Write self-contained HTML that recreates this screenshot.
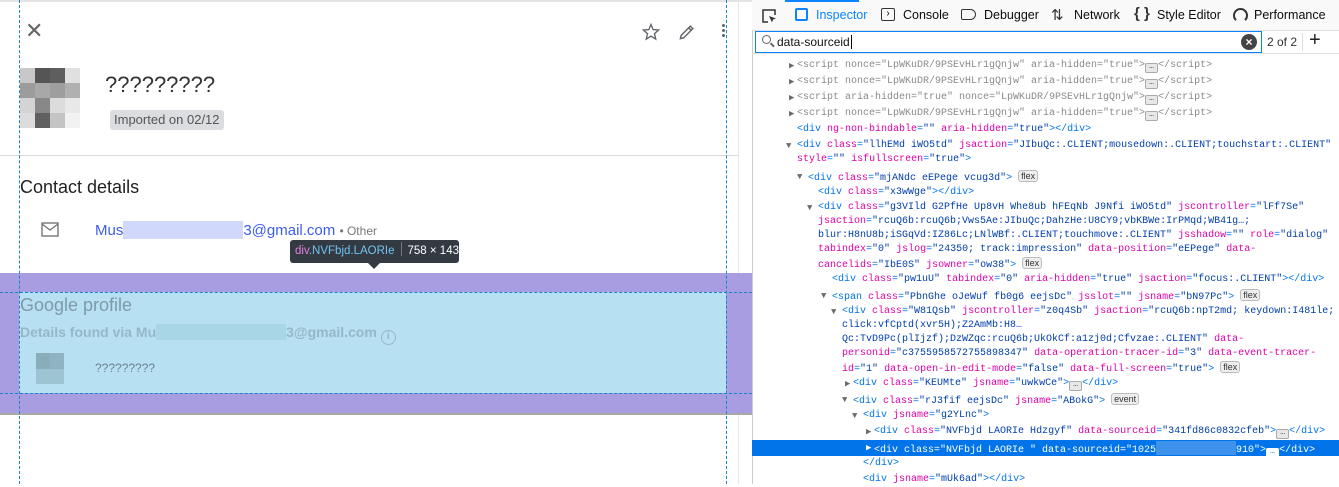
<!DOCTYPE html>
<html><head><meta charset="utf-8"><style>
*{margin:0;padding:0;box-sizing:border-box}
body{width:1339px;height:484px;overflow:hidden;background:#fff;position:relative;font-family:"Liberation Sans",Arial,sans-serif}
.a{position:absolute}
.mono{font-family:"Liberation Mono","DejaVu Sans Mono",monospace;font-size:10px;white-space:pre;line-height:14px;color:#0074e8}
.n{color:#dd00a9}.v{color:#003eaa}.g{color:#8a8a8a}
.tw{position:absolute;left:0;width:9px;font-size:9px;color:#6b6b6b}
.badge{display:inline-block;border:1px solid #bbb;border-radius:3px;background:#eee;color:#333;font-size:9px;line-height:10px;padding:0 2px;vertical-align:1px;font-family:"Liberation Sans",sans-serif}
.el{display:inline-block;border:1px solid #aaa;border-radius:2px;background:#e8e8e8;width:13px;height:10px;vertical-align:-1px;font-size:8px;line-height:6px;text-align:center;color:#333}
.tab{position:absolute;top:0;line-height:31px;font-size:12.5px;color:#0c0c0d;white-space:nowrap}
</style></head><body>
<div class="a" style="left:0;top:0;width:752px;height:2px;background:#e3e3e3"></div>
<div class="a" style="left:738px;top:0;width:1px;height:484px;background:#e6e6e6"></div>
<div class="a" style="left:0;top:155px;width:738px;height:1px;background:#dadada"></div>
<div class="a" style="left:25px;top:20px;font-size:22px;color:#666;line-height:22px">✕</div>
<svg class="a" style="left:641px;top:22px" width="20" height="20" viewBox="0 0 24 24"><path d="M12 3l2.6 6.1 6.6.5-5 4.4 1.5 6.5L12 17l-5.7 3.5 1.5-6.5-5-4.4 6.6-.5z" fill="none" stroke="#5f6368" stroke-width="1.6"/></svg>
<svg class="a" style="left:677px;top:22px" width="20" height="20" viewBox="0 0 24 24"><path d="M4 20l1-4L16 5l3 3L8 19zM14 7l3 3" fill="none" stroke="#5f6368" stroke-width="1.7"/></svg>
<div class="a" style="left:722px;top:24px;width:3px;height:3px;background:#5f6368;border-radius:50%;box-shadow:0 5px #5f6368,0 10px #5f6368"></div>
<div class="a" style="left:20px;top:68px;display:grid;grid-template-columns:repeat(4,15px);grid-auto-rows:15px">
<i style="background:#c8c8c8"></i><i style="background:#555"></i><i style="background:#5e5e5e"></i><i style="background:#e0e0e0"></i>
<i style="background:#9c9c9c"></i><i style="background:#a8a8a8"></i><i style="background:#9e9e9e"></i><i style="background:#b0b0b0"></i>
<i style="background:#d4d4d4"></i><i style="background:#888"></i><i style="background:#dcdcdc"></i><i style="background:#e8e8e8"></i>
<i style="background:#dcdcdc"></i><i style="background:#606060"></i><i style="background:#c4c4c4"></i><i style="background:#f2f2f2"></i>
</div>
<div class="a" style="left:105px;top:72px;font-size:22px;color:#333">?????????</div>
<div class="a" style="left:110px;top:110px;height:20px;padding:0 4px;background:#dcdde0;border-radius:3px;font-size:13px;line-height:20px;color:#555">Imported on 02/12</div>
<div class="a" style="left:20px;top:177px;font-size:18px;color:#222">Contact details</div>
<svg class="a" style="left:41px;top:222px" width="18" height="15" viewBox="0 0 18 15"><rect x="1" y="1" width="16" height="13" fill="none" stroke="#777" stroke-width="1.4"/><path d="M1 2l8 6 8-6" fill="none" stroke="#777" stroke-width="1.4"/></svg>
<div class="a" style="left:95px;top:221px;font-size:15px;color:#3c5cf0;white-space:nowrap">Mus<span style="display:inline-block;width:120px;height:18px;vertical-align:-4px;background:#d0d8fb"></span>3@gmail.com <span style="font-size:12px;color:#777">• Other</span></div>
<div class="a" style="left:0;top:273px;width:752px;height:141px;background:#a79de0"></div>
<div class="a" style="left:0;top:413px;width:752px;height:2px;background:#a8a8a8"></div>
<div class="a" style="left:19px;top:292px;width:707px;height:101px;background:#b7e0f2"></div>
<div class="a" style="left:0;top:292px;width:752px;border-top:1px dashed #1a82c8"></div>
<div class="a" style="left:0;top:393px;width:752px;border-top:1px dashed #1a82c8"></div>
<div class="a" style="left:20px;top:295px;font-size:18px;color:#7e9aa6">Google profile</div>
<div class="a" style="left:20px;top:324px;font-size:14px;color:#95b8c8;font-weight:bold;white-space:nowrap">Details found via Mu<span style="display:inline-block;width:130px;height:16px;vertical-align:-3px;background:#a9d6e6"></span>3@gmail.com <span style="display:inline-block;width:15px;height:15px;border:1.5px solid #95b8c8;border-radius:50%;font-size:10px;line-height:12px;text-align:center;vertical-align:-2px">i</span></div>
<div class="a" style="left:36px;top:353px;width:14px;height:16px;background:#89aebb"></div>
<div class="a" style="left:36px;top:369px;width:28px;height:15px;background:#9cc4d2"></div>
<div class="a" style="left:50px;top:353px;width:14px;height:16px;background:#8fb3c0"></div>
<div class="a" style="left:95px;top:361px;font-size:12px;color:#6b8590">?????????</div>
<div class="a" style="left:19px;top:0;height:484px;border-left:1px dashed #1a82c8"></div>
<div class="a" style="left:726px;top:0;height:484px;border-left:1px dashed #1a82c8"></div>
<div class="a" style="left:290px;top:240px;width:169px;height:23px;background:#343a42;border-radius:3px;font-size:11.5px;line-height:23px;color:#fff;padding-left:5px;white-space:nowrap"><span style="color:#e081e5">div</span><span style="color:#6fc3f5">.NVFbjd.LAORIe</span><span style="display:inline-block;width:1px;height:14px;background:#777;margin:0 6px;vertical-align:-2px"></span>758 × 143</div>
<div class="a" style="left:368px;top:263px;border:6px solid transparent;border-top-color:#343a42;border-bottom:0"></div>
<!-- devtools -->
<div class="a" style="left:752px;top:0;width:587px;height:484px;background:#fff;border-left:1px solid #ccc"></div>
<div class="a" style="left:752px;top:0;width:587px;height:31px;background:#f9f9fa;border-bottom:1px solid #e0e0e2"></div>
<div class="a" style="left:785px;top:0;width:74px;height:2px;background:#0a84ff"></div>
<svg class="a" style="left:761px;top:8px" width="16" height="16" viewBox="0 0 16 16"><path d="M7 14H2V2h12v5" fill="none" stroke="#333" stroke-width="1.5"/><path d="M8 8l7 2.5-3 1-1 3z" fill="#333"/></svg>
<div class="a" style="left:795px;top:8px;width:13px;height:13px;border:2px solid #0a84ff;border-radius:2px"></div>
<div class="a" style="left:881px;top:8px;width:14px;height:13px;border:1.5px solid #333;border-radius:2px;font-size:10px;line-height:10px;text-align:center">›</div>
<div class="a" style="left:961px;top:9px;width:15px;height:11px;border:1.5px solid #333;border-radius:2px 6px 6px 2px"></div>
<div class="a" style="left:1051px;top:6px;font-size:15px;color:#333">⇅</div>
<div class="a" style="left:1134px;top:5px;font-size:15px;color:#333;font-weight:bold">{ }</div>
<div class="a" style="left:1233px;top:8px;width:15px;height:15px;border:2px solid #333;border-radius:50%;border-bottom-color:transparent"></div>
<div class="tab" style="left:816px;color:#0a84ff">Inspector</div>
<div class="tab" style="left:903px">Console</div>
<div class="tab" style="left:984px">Debugger</div>
<div class="tab" style="left:1074px">Network</div>
<div class="tab" style="left:1157px">Style Editor</div>
<div class="tab" style="left:1254px">Performance</div>
<div class="a" style="left:755px;top:31px;width:507px;height:22px;border:1px solid #0a84ff"></div>
<div class="a" style="left:762px;top:35px;width:9px;height:9px;border:1.5px solid #666;border-radius:50%"></div>
<div class="a" style="left:770px;top:44px;width:5px;height:1.5px;background:#666;transform:rotate(45deg)"></div>
<div class="a" style="left:777px;top:31px;line-height:22px;font-size:12px;color:#111">data-sourceid<span style="border-left:1px solid #000;margin-left:1px"></span></div>
<div class="a" style="left:1241px;top:34px;width:16px;height:16px;border-radius:50%;background:#444;color:#fff;font-size:12px;line-height:16px;text-align:center;font-weight:bold">×</div>
<div class="a" style="left:1267px;top:31px;line-height:22px;font-size:12px;color:#333">2 of 2</div>
<div class="a" style="left:1302px;top:33px;height:18px;border-left:1px solid #ddd"></div>
<div class="a" style="left:1309px;top:29px;font-size:20px;color:#222">+</div>
<div class="a" style="left:752px;top:53px;width:587px;height:1px;background:#e0e0e2"></div>
<div class="a" style="left:752px;top:440px;width:587px;height:16px;background:#0074e8"></div>

<div class="a mono g" style="left:797px;top:59px"><span class="tw" style="left:-8px">▶</span>&lt;script nonce="LpWKuDR/9PSEvHLr1gQnjw" aria-hidden="true"&gt;<span class="el">…</span>&lt;/script&gt;</div>
<div class="a mono g" style="left:797px;top:75px"><span class="tw" style="left:-8px">▶</span>&lt;script nonce="LpWKuDR/9PSEvHLr1gQnjw" aria-hidden="true"&gt;<span class="el">…</span>&lt;/script&gt;</div>
<div class="a mono g" style="left:797px;top:91px"><span class="tw" style="left:-8px">▶</span>&lt;script aria-hidden="true" nonce="LpWKuDR/9PSEvHLr1gQnjw"&gt;<span class="el">…</span>&lt;/script&gt;</div>
<div class="a mono g" style="left:797px;top:107px"><span class="tw" style="left:-8px">▶</span>&lt;script nonce="LpWKuDR/9PSEvHLr1gQnjw" aria-hidden="true"&gt;<span class="el">…</span>&lt;/script&gt;</div>
<div class="a mono" style="left:797px;top:123px">&lt;div <span class="n">ng-non-bindable</span>=<span class="v">""</span> <span class="n">aria-hidden</span>=<span class="v">"true"</span>&gt;&lt;/div&gt;</div>
<div class="a mono" style="left:797px;top:139px"><span class="tw" style="left:-11px">▼</span>&lt;div <span class="n">class</span>=<span class="v">"llhEMd iWO5td"</span> <span class="n">jsaction</span>=<span class="v">"JIbuQc:.CLIENT;mousedown:.CLIENT;touchstart:.CLIENT"</span>
<span class="n">style</span>=<span class="v">""</span> <span class="n">isfullscreen</span>=<span class="v">"true"</span>&gt;</div>
<div class="a mono" style="left:808px;top:170px"><span class="tw" style="left:-11px">▼</span>&lt;div <span class="n">class</span>=<span class="v">"mjANdc eEPege vcug3d"</span>&gt; <span class="badge">flex</span></div>
<div class="a mono" style="left:818px;top:186px">&lt;div <span class="n">class</span>=<span class="v">"x3wWge"</span>&gt;&lt;/div&gt;</div>
<div class="a mono" style="left:818px;top:201px"><span class="tw" style="left:-11px">▼</span>&lt;div <span class="n">class</span>=<span class="v">"g3VIld G2PfHe Up8vH Whe8ub hFEqNb J9Nfi iWO5td"</span> <span class="n">jscontroller</span>=<span class="v">"lFf7Se"</span>
<span class="n">jsaction</span>=<span class="v">"rcuQ6b:rcuQ6b;Vws5Ae:JIbuQc;DahzHe:U8CY9;vbKBWe:IrPMqd;WB41g…;</span>
<span class="v">blur:H8nU8b;iSGqVd:IZ86Lc;LNlWBf:.CLIENT;touchmove:.CLIENT"</span> <span class="n">jsshadow</span>=<span class="v">""</span> <span class="n">role</span>=<span class="v">"dialog"</span>
<span class="n">tabindex</span>=<span class="v">"0"</span> <span class="n">jslog</span>=<span class="v">"24350; track:impression"</span> <span class="n">data-position</span>=<span class="v">"eEPege"</span> <span class="n">data-</span>
<span class="n">cancelids</span>=<span class="v">"IbE0S"</span> <span class="n">jsowner</span>=<span class="v">"ow38"</span>&gt; <span class="badge">flex</span></div>
<div class="a mono" style="left:832px;top:273px">&lt;div <span class="n">class</span>=<span class="v">"pw1uU"</span> <span class="n">tabindex</span>=<span class="v">"0"</span> <span class="n">aria-hidden</span>=<span class="v">"true"</span> <span class="n">jsaction</span>=<span class="v">"focus:.CLIENT"</span>&gt;&lt;/div&gt;</div>
<div class="a mono" style="left:832px;top:289px"><span class="tw" style="left:-11px">▼</span>&lt;span <span class="n">class</span>=<span class="v">"PbnGhe oJeWuf fb0g6 eejsDc"</span> <span class="n">jsslot</span>=<span class="v">""</span> <span class="n">jsname</span>=<span class="v">"bN97Pc"</span>&gt; <span class="badge">flex</span></div>
<div class="a mono" style="left:842px;top:305px"><span class="tw" style="left:-11px">▼</span>&lt;div <span class="n">class</span>=<span class="v">"W81Qsb"</span> <span class="n">jscontroller</span>=<span class="v">"z0q4Sb"</span> <span class="n">jsaction</span>=<span class="v">"rcuQ6b:npT2md; keydown:I481le;</span>
<span class="v">click:vfCptd(xvr5H);Z2AmMb:H8…</span>
<span class="v">Qc:TvD9Pc(plIjzf);DzWZqc:rcuQ6b;UkOkCf:a1zj0d;Cfvzae:.CLIENT"</span> <span class="n">data-</span>
<span class="n">personid</span>=<span class="v">"c3755958572755898347"</span> <span class="n">data-operation-tracer-id</span>=<span class="v">"3"</span> <span class="n">data-event-tracer-</span>
<span class="n">id</span>=<span class="v">"1"</span> <span class="n">data-open-in-edit-mode</span>=<span class="v">"false"</span> <span class="n">data-full-screen</span>=<span class="v">"true"</span>&gt; <span class="badge">flex</span></div>
<div class="a mono" style="left:853px;top:377px"><span class="tw" style="left:-8px">▶</span>&lt;div <span class="n">class</span>=<span class="v">"KEUMte"</span> <span class="n">jsname</span>=<span class="v">"uwkwCe"</span>&gt;<span class="el">…</span>&lt;/div&gt;</div>
<div class="a mono" style="left:853px;top:393px"><span class="tw" style="left:-11px">▼</span>&lt;div <span class="n">class</span>=<span class="v">"rJ3fif eejsDc"</span> <span class="n">jsname</span>=<span class="v">"ABokG"</span>&gt; <span class="badge">event</span></div>
<div class="a mono" style="left:863px;top:409px"><span class="tw" style="left:-11px">▼</span>&lt;div <span class="n">jsname</span>=<span class="v">"g2YLnc"</span>&gt;</div>
<div class="a mono" style="left:874px;top:425px"><span class="tw" style="left:-8px">▶</span>&lt;div <span class="n">class</span>=<span class="v">"NVFbjd LAORIe Hdzgyf"</span> <span class="n">data-sourceid</span>=<span class="v">"341fd86c0832cfeb"</span>&gt;<span class="el">…</span>&lt;/div&gt;</div>
<div class="a mono" style="left:874px;top:441px;color:#fff"><span class="tw" style="left:-8px;color:#fff">▶</span>&lt;div class="NVFbjd LAORIe " data-sourceid="1025<span style="display:inline-block;width:80px;height:14px;background:#3d92ec;vertical-align:-3px"></span>910"&gt;<span class="el" style="background:#fff;border-color:#fff;color:#0074e8">…</span>&lt;/div&gt;</div>
<div class="a mono" style="left:863px;top:457px">&lt;/div&gt;</div>
<div class="a mono" style="left:863px;top:473px">&lt;div <span class="n">jsname</span>=<span class="v">"mUk6ad"</span>&gt;&lt;/div&gt;</div>
</body></html>
